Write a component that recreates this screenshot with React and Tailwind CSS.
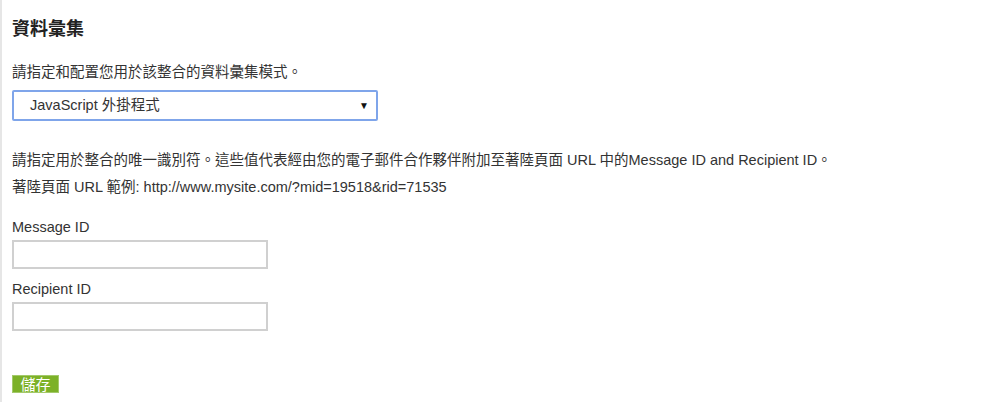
const FONT = "font-['Liberation_Sans','Noto_Sans_CJK_TC',sans-serif]";

function Field({ label, first }) {
  return (
    <div className={first ? "mt-[20px]" : "mt-[10px]"}>
      <div className="h-5 leading-5 text-[14.5px]">{label}</div>
      <input
        type="text"
        className="mt-[3px] block h-[29px] w-[256px] border-2 border-[#d0d0d0] bg-white outline-none"
      />
    </div>
  );
}

export default function App() {
  return (
    <div className={`${FONT} h-[402px] border-l-2 border-[#e6e6e6] bg-white pl-[10px] pt-[17px] text-[#333]`}>
      <h2 className="h-6 text-[18px] font-bold leading-6 text-[#222]">資料彙集</h2>

      <p className="mt-[21px] h-5 text-[14.5px] leading-5">請指定和配置您用於該整合的資料彙集模式。</p>

      {/* data collection mode select */}
      <div className="mt-2 flex h-[31px] w-[366px] items-center justify-between rounded-[2px] border-2 border-[#7fa5ea] bg-white pl-4 pr-[7px]">
        <span className="text-[14.5px]">JavaScript 外掛程式</span>
        <span className="text-[10px] text-[#111]">▼</span>
      </div>

      <p className="mt-[29px] h-5 whitespace-nowrap text-[14.5px] leading-5">
        請指定用於整合的唯一識別符。這些值代表經由您的電子郵件合作夥伴附加至著陸頁面 URL 中的Message ID and Recipient ID。
      </p>
      <p className="mt-[7px] h-5 text-[14.5px] leading-5">
        著陸頁面 URL 範例: http://www.mysite.com/?mid=19518&amp;rid=71535
      </p>

      <Field label="Message ID" first />
      <Field label="Recipient ID" />

      <button className="mt-[44px] flex h-[18px] w-[47px] items-center justify-center border border-[#a3c96a] bg-[#7cb128] text-[15px] leading-none text-white">
        儲存
      </button>
    </div>
  );
}
